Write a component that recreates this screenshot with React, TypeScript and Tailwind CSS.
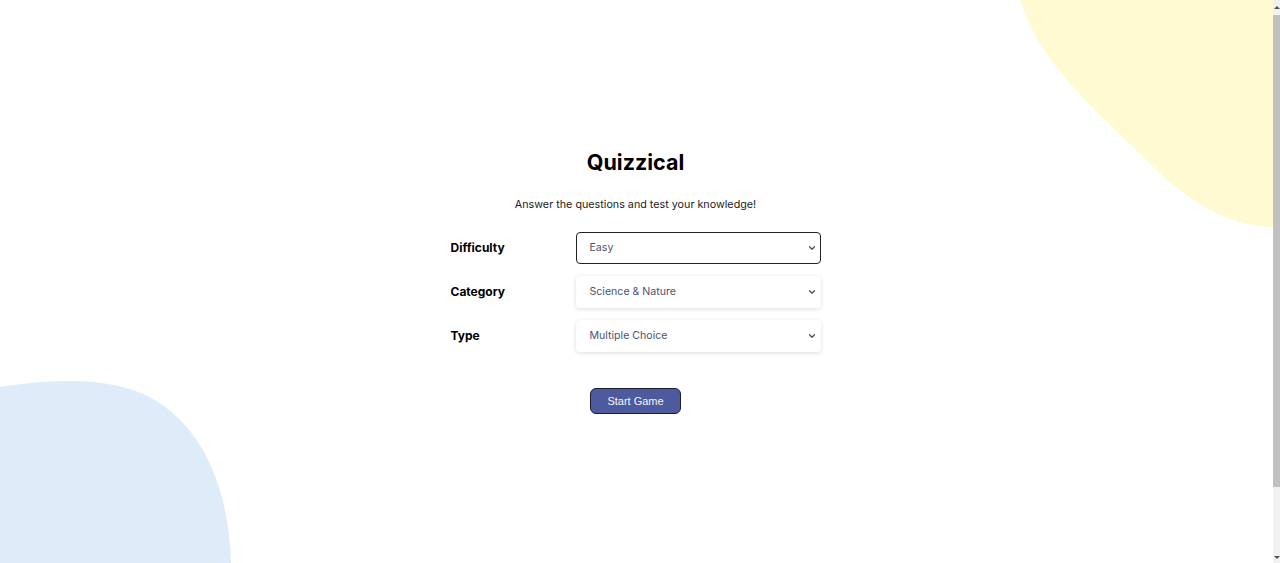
import React from "react";

function Chevron() {
  return (
    <svg width="10" height="10" viewBox="0 0 10 10" fill="none" className="shrink-0">
      <path d="M2.5 3.8 L5 6.2 L7.5 3.8" stroke="#4a4f6a" strokeWidth="1.3" strokeLinecap="round" strokeLinejoin="round" />
    </svg>
  );
}

function Row({ label, value, focused }: { label: string; value: string; focused?: boolean }) {
  return (
    <div className="grid grid-cols-[125px_245px] items-center">
      <span className="text-[12px] font-bold text-black">{label}</span>
      <div
        className={
          focused
            ? "h-[32px] flex items-center justify-between pl-[13px] pr-[3px] rounded-[4px] border-[1.5px] border-[#222] bg-white"
            : "h-[32px] flex items-center justify-between pl-[14px] pr-[4px] rounded-[4px] bg-white shadow-[0_1px_4px_rgba(0,0,0,0.14)]"
        }
      >
        <span className="text-[10.6px] text-[#4d5370]">{value}</span>
        <Chevron />
      </div>
    </div>
  );
}

export default function App() {
  return (
    <div className="relative w-full h-[563px] overflow-hidden bg-white" style={{ fontFamily: "Inter, 'Noto Sans', sans-serif" }}>
      <svg className="absolute inset-0" width="1280" height="563" viewBox="0 0 1280 563">
        <path d="M1020,0 C1040,60 1080,95 1133,147 C1180,195 1220,226 1273,227 L1273,0 Z" fill="#fffad1" />
        <path d="M0,387 C40,381 90,376 133,390 C190,410 228,470 231,563 L0,563 Z" fill="#deebf8" />
      </svg>

      <div className="relative w-[1271px] flex flex-col items-center pt-[149px]">
        <h1 className="text-[21.5px] leading-[26px] font-bold text-black">Quizzical</h1>
        <p className="mt-[22px] text-[10.75px] leading-[16px] text-[#222]">Answer the questions and test your knowledge!</p>
        <div className="mt-[19px] flex flex-col gap-[12px]">
          <Row label="Difficulty" value="Easy" focused />
          <Row label="Category" value="Science & Nature" />
          <Row label="Type" value="Multiple Choice" />
        </div>
        <button
          className="mt-[36px] w-[91px] h-[26px] rounded-[6px] bg-[#4d5b9e] border border-[#1c1f2e] text-[11px] text-[#f5f7fb]"
          style={{ fontFamily: "'Liberation Sans', Arial, sans-serif" }}
        >
          Start Game
        </button>
      </div>

      <div className="absolute right-0 top-0 w-[7px] h-[563px] bg-[#f1f1f1] flex flex-col items-center">
        <div className="h-[15px] flex items-center justify-center">
          <div className="w-0 h-0 border-l-[3px] border-r-[3px] border-b-[3px] border-l-transparent border-r-transparent border-b-[#505050]" />
        </div>
        <div className="w-[7px] h-[472px] bg-[#c1c1c1]" />
        <div className="flex-1" />
        <div className="h-[12px] flex items-center justify-center">
          <div className="w-0 h-0 border-l-[3px] border-r-[3px] border-t-[3px] border-l-transparent border-r-transparent border-t-[#505050]" />
        </div>
      </div>
    </div>
  );
}
